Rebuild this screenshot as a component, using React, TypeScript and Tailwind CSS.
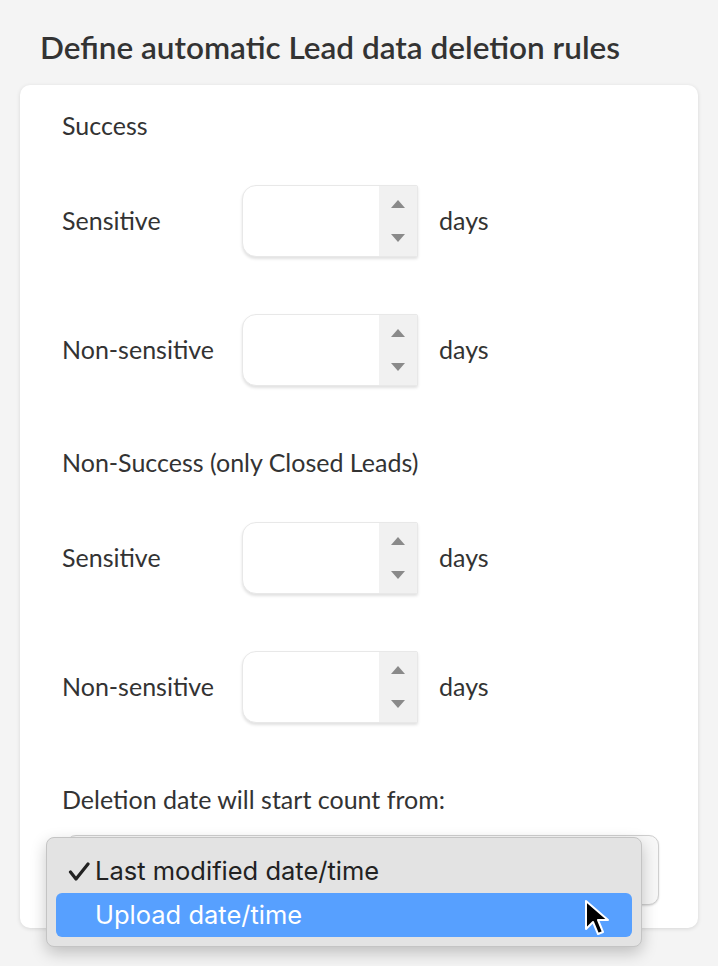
import React from 'react';

function NumberField() {
  return (
    <div className="flex h-[72px] w-[176px] overflow-hidden rounded-l-[14px] rounded-r-[2px] border border-[#e8e8e8] bg-white shadow-[0_2px_3px_rgba(0,0,0,0.12)]">
      <div className="flex-1" />
      <div className="flex w-[38px] flex-col items-center justify-between bg-[#f1f1f1] py-[13px]">
        <svg width="16" height="10" viewBox="0 0 16 10">
          <path d="M8 1 L15 9 L1 9 Z" fill="#8a8a8a" />
        </svg>
        <svg width="16" height="10" viewBox="0 0 16 10">
          <path d="M1 1 L15 1 L8 9 Z" fill="#8a8a8a" />
        </svg>
      </div>
    </div>
  );
}

function DaysRow({ label }: { label: string }) {
  return (
    <div className="flex h-[72px] items-center">
      <div className="w-[180px] text-[25px] text-[#333]">{label}</div>
      <NumberField />
      <div className="ml-[21px] text-[25px] text-[#333]">days</div>
    </div>
  );
}

export default function App() {
  return (
    <div
      className="relative min-h-[966px] w-[718px] bg-[#f4f4f4] px-[20px] pt-[28px]"
      style={{ fontFamily: 'Lato, "Open Sans", sans-serif' }}
    >
      <h1 className="h-[38px] pl-[20px] text-[31.5px] leading-[38px] font-semibold text-[#333]">
        Define automatic Lead data deletion rules
      </h1>
      <div className="mt-[19px] rounded-[10px] bg-white px-[42px] pt-[25px] pb-[23px] shadow-[0_1px_4px_rgba(0,0,0,0.12)]">
        <div className="h-[30px] text-[25px] leading-[30px] text-[#333]">Success</div>
        <div className="mt-[45px]">
          <DaysRow label="Sensitive" />
        </div>
        <div className="mt-[57px]">
          <DaysRow label="Non-sensitive" />
        </div>
        <div className="mt-[61px] h-[30px] text-[25px] leading-[30px] text-[#333]">
          Non-Success (only Closed Leads)
        </div>
        <div className="mt-[45px]">
          <DaysRow label="Sensitive" />
        </div>
        <div className="mt-[57px]">
          <DaysRow label="Non-sensitive" />
        </div>
        <div className="mt-[61px] h-[30px] text-[25px] leading-[30px] text-[#333]">
          Deletion date will start count from:
        </div>
        <div className="mt-[21px] ml-[4px] h-[70px] w-[593px] rounded-[10px] border border-[#cfcfcf] bg-[#f7f7f7] shadow-[0_1px_2px_rgba(0,0,0,0.15)]" />
      </div>

      {/* open select menu */}
      <div
        className="absolute top-[837px] left-[46px] h-[110px] w-[596px] rounded-[8px] border border-[#c4c4c4] bg-[#e3e3e3] px-[9px] pt-[11px] shadow-[0_6px_16px_rgba(0,0,0,0.22)]"
        style={{ fontFamily: 'Inter, Roboto, sans-serif' }}
      >
        <div className="flex h-[44px] items-center text-[25.5px] text-[#222]">
          <span className="flex w-[39px] justify-end pr-[5px]">
            <svg width="22" height="19" viewBox="0 0 22 19">
              <path
                d="M2.5 10 L8 17 L20 2"
                fill="none"
                stroke="#222"
                strokeWidth="3.2"
                strokeLinecap="round"
                strokeLinejoin="round"
              />
            </svg>
          </span>
          <span>Last modified date/time</span>
        </div>
        <div className="flex h-[44px] items-center rounded-[6px] bg-[#57a0ff] text-[25.5px] text-white">
          <span className="w-[39px]" />
          <span>Upload date/time</span>
        </div>
      </div>

      {/* cursor */}
      <svg className="absolute top-[899px] left-[584px]" width="28" height="38" viewBox="0 0 28 38">
        <path
          d="M2 2 L2 30 L9 23 L14 35 L19 33 L14 21 L24 21 Z"
          fill="#000"
          stroke="#fff"
          strokeWidth="2"
          strokeLinejoin="round"
        />
      </svg>
    </div>
  );
}
